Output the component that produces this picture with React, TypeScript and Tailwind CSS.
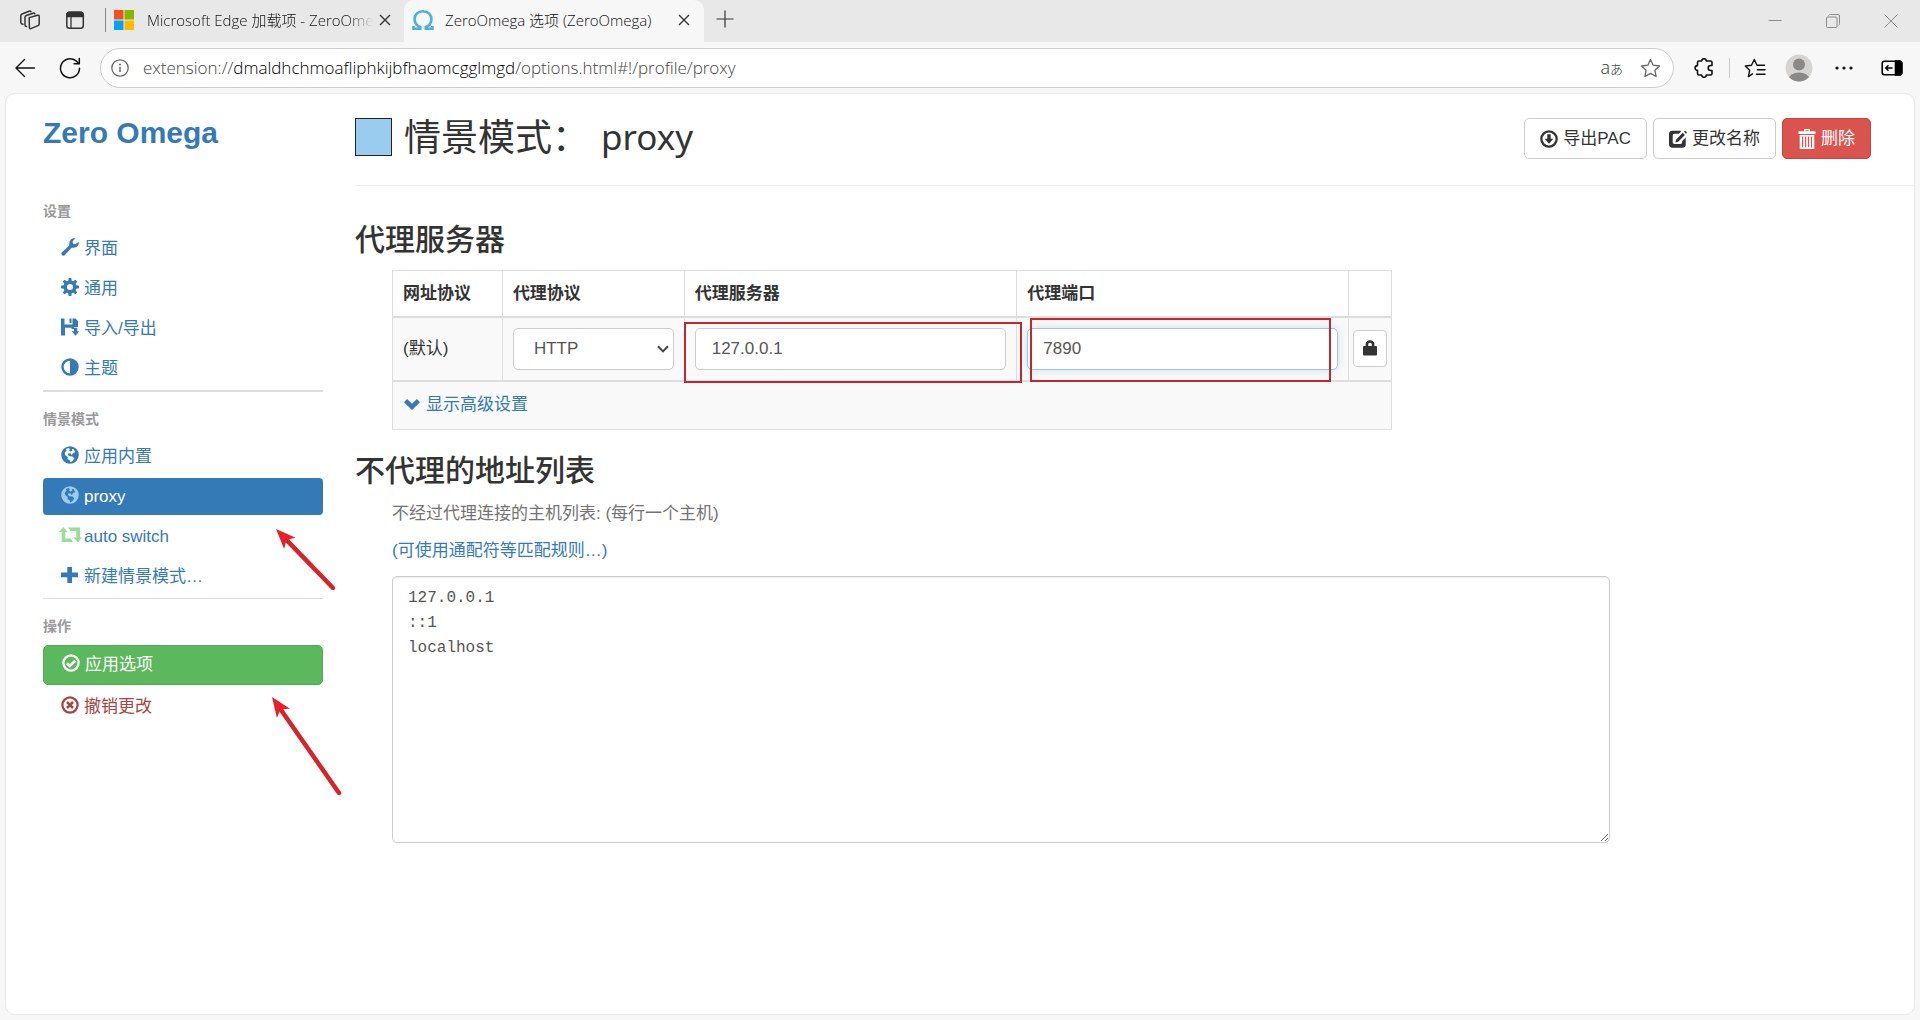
import React from "react";

type IconProps = { className?: string };

const small = "h-[18px] w-[18px] shrink-0";

/* ---------- browser chrome icons ---------- */

const WorkspacesIcon = () => (
  <svg viewBox="0 0 22 22" className="h-[22px] w-[22px]" fill="none" stroke="#333" strokeWidth="1.5" strokeLinejoin="round" strokeLinecap="round">
    <path d="M10.2 8.6 18.6 6.2Q20.2 5.9 20.2 7.5V15q0 1.2-1.2 1.6l-6.6 2.8q-2 .8-2-1.200z" />
    <path d="M7.600 17.600Q6 17.600 6 16V8.300Q6 7 7.300 6.500L14 4.200q1.300-.4 1.900.6" />
    <path d="M4 15.300Q1.800 15 1.800 13.500V6.800Q1.800 5.500 3.100 5L10 2.200q1.300-.5 2 .5" />
  </svg>
);

const TabActionsIcon = () => (
  <svg viewBox="0 0 20 20" className="h-5 w-5" fill="none" stroke="#333" strokeWidth="1.5">
    <rect x="1.800" y="2.300" width="16.500" height="16" rx="2.800" />
    <path d="M1.800 5a2.700 2.700 0 0 1 2.700-2.700h11A2.700 2.700 0 0 1 18.300 5v1.500H1.800z" fill="#333" />
    <path d="M6 7v11" strokeWidth="1.300" />
  </svg>
);

const MicrosoftLogo = () => (
  <svg viewBox="0 0 20 20" className="h-5 w-5 shrink-0">
    <path fill="#f25022" d="M0 0h9.500v9.500H0z" />
    <path fill="#7fba00" d="M10.500 0H20v9.500h-9.500z" />
    <path fill="#00a4ef" d="M0 10.500h9.500V20H0z" />
    <path fill="#ffb900" d="M10.500 10.500H20V20h-9.500z" />
  </svg>
);

const OmegaLogo = () => (
  <svg viewBox="0 0 22 22" className="h-[22px] w-[22px] shrink-0" fill="none" stroke="#4cb0df" strokeWidth="2.600">
    <path d="M1.500 17v2.700h6.700V18C4.800 16.500 2.600 13.700 2.600 10.200 2.600 5.300 6.300 2.200 11 2.200s8.400 3.100 8.400 8c0 3.500-2.200 6.300-5.600 7.800v1.700h6.700V17" />
  </svg>
);

const CrossIcon = () => (
  <svg viewBox="0 0 12 12" className="h-3 w-3" stroke="#333" strokeWidth="1.400" fill="none">
    <path d="m1 1 10 10M11 1 1 11" />
  </svg>
);

const PlusThin = () => (
  <svg viewBox="0 0 18 18" className="h-[18px] w-[18px]" stroke="#333" strokeWidth="1.200" fill="none">
    <path d="M9 .500v17M.500 9h17" />
  </svg>
);

const MinimizeIcon = () => (
  <svg viewBox="0 0 14 14" className="h-3.5 w-3.5" stroke="#8a8a8a" fill="none">
    <path d="M.500 6.500h13" />
  </svg>
);

const RestoreIcon = () => (
  <svg viewBox="0 0 14 14" className="h-3.5 w-3.5" stroke="#8a8a8a" fill="none">
    <rect x=".500" y="3" width="10.500" height="10.500" rx="1" />
    <path d="M2.500 1.500Q3 .500 4.500.500H12Q13.500.500 13.500 2v7.500Q13.500 11 12.500 11.500" />
  </svg>
);

const CloseWindowIcon = () => (
  <svg viewBox="0 0 14 14" className="h-3.5 w-3.5" stroke="#8a8a8a" fill="none">
    <path d="m.500.500 13 13M13.500.500l-13 13" />
  </svg>
);

const BackIcon = () => (
  <svg viewBox="0 0 20 20" className="h-5 w-5" stroke="#111" strokeWidth="1.400" fill="none" strokeLinecap="round" strokeLinejoin="round">
    <path d="M19.500 10H1M9.500 1.500 1 10l8.500 8.500" />
  </svg>
);

const ReloadIcon = () => (
  <svg viewBox="0 0 22 22" className="h-[22px] w-[22px]" stroke="#111" strokeWidth="1.500" fill="none" strokeLinecap="round" strokeLinejoin="round">
    <path d="M20.500 11.200A9.500 9.500 0 1 1 17 3.900L20 6.500" />
    <path d="M20.300 1.500v5.200h-5.200" />
  </svg>
);

const InfoIcon = () => (
  <svg viewBox="0 0 18 18" className="h-[18px] w-[18px] shrink-0" stroke="#666" strokeWidth="1.300" fill="none">
    <circle cx="9" cy="9" r="8.200" />
    <path d="M9 7.800V13" strokeWidth="1.500" />
    <circle cx="9" cy="5.500" r="1" fill="#666" stroke="none" />
  </svg>
);

const starPath = "M10.500 1.500 13.200 7.200 19.500 8 14.900 12.300 16.100 18.500 10.500 15.400 4.900 18.500 6.100 12.300 1.500 8 7.800 7.200z";

const StarIcon = () => (
  <svg viewBox="0 0 21 21" className="h-[21px] w-[21px]" stroke="#666" strokeWidth="1.300" fill="none" strokeLinejoin="round">
    <path d={starPath} />
  </svg>
);

const PuzzleIcon = () => (
  <svg viewBox="0 0 20 20" className="h-5 w-5" stroke="#111" strokeWidth="1.600" fill="none" strokeLinejoin="round">
    <path d="M5 3H7.700a2.300 2.300 0 0 1 4.600 0H16.500Q18 3 18 4.500V7.500H16.700a2.500 2.500 0 0 0 0 5H18V15.500Q18 17 16.500 17H12.300a2.300 2.300 0 0 1-4.600 0H5Q3.500 17 3.500 15.500V12.400a2.400 2.400 0 0 1 0-4.800V4.500Q3.500 3 5 3z" />
  </svg>
);

const FavoritesIcon = () => (
  <svg viewBox="0 0 22 21" className="h-[21px] w-[22px]" stroke="#111" strokeWidth="1.400" fill="none" strokeLinejoin="round" strokeLinecap="round">
    <path d="M8.500 15.800 4.400 18.600 5.700 12.200 1.300 8 7.500 7.200 10.300 1.500 13 7.200H20.500M13.500 11.700h7.500M12.500 16.200H21" />
  </svg>
);

const Avatar = () => (
  <svg viewBox="0 0 28 28" className="h-7 w-7">
    <clipPath id="avatar-clip"><circle cx="14" cy="14" r="13.500" /></clipPath>
    <circle cx="14" cy="14" r="13.500" fill="#d5d4d2" />
    <g clipPath="url(#avatar-clip)" fill="#8b8986">
      <circle cx="14" cy="10.500" r="6" />
      <ellipse cx="14" cy="25.500" rx="10.500" ry="7" />
    </g>
  </svg>
);

const DotsIcon = () => (
  <svg viewBox="0 0 18 4" className="h-1 w-[18px]" fill="#111">
    <circle cx="2" cy="2" r="1.600" /><circle cx="9" cy="2" r="1.600" /><circle cx="16" cy="2" r="1.600" />
  </svg>
);

const SidePanelIcon = () => (
  <svg viewBox="0 0 22 16" className="h-4 w-[22px]" fill="none" stroke="#000" strokeWidth="1.600">
    <rect x="1.200" y="1.200" width="19.500" height="13.600" rx="2.200" />
    <path d="M14.500 1h4Q20.800 1 20.800 3.300v9.400Q20.800 15 18.500 15h-4z" fill="#000" />
    <path d="M11.500 8H5M7.500 5.300 4.700 8l2.800 2.700" strokeWidth="1.400" />
  </svg>
);

/* ---------- page icons ---------- */

const WrenchIcon = () => (
  <svg viewBox="0 0 18 18" className={small} fill="currentColor">
    <path d="M14.500.300 11.600 3.300 12 5.800 14.500 6.300 17.700 3.700C18.300 7 16.200 9.800 12.700 9.700L10.600 9.800 3.600 17.200C2 18.800-.800 16.200.700 14.500L8.100 7.800 8.300 5C8.500 1.600 11.300-.500 14.500.300z" />
  </svg>
);

const GearIcon = () => (
  <svg viewBox="0 0 18 18" className={small} fill="currentColor">
    {[0, 45, 90, 135].map((a) => (
      <path key={a} d="M7.700 0h2.600l.6 4H7.100zM7.700 18h2.600l.6-4H7.100z" transform={`rotate(${a} 9 9)`} />
    ))}
    <path fillRule="evenodd" d="M9 2.500a6.500 6.500 0 1 1 0 13 6.500 6.500 0 0 1 0-13zM9 6a3 3 0 1 0 0 6 3 3 0 0 0 0-6z" />
  </svg>
);

const SaveIcon = () => (
  <svg viewBox="0 0 18 18" className={small} fill="currentColor">
    <path fillRule="evenodd" d="M0 .500h3.500V6.500h8V.500H14.500L17 3V9H13v2H10.500V9.800H4V17.500H0zM8.500.500h2v4.500h-2z" />
    <path d="M13 9.800h3.200v3.400H18.300L14.600 17.800 10.600 13.200H13z" />
  </svg>
);

const ContrastIcon = () => (
  <svg viewBox="0 0 18 18" className={small} fill="currentColor">
    <path fillRule="evenodd" d="M9 .300a8.700 8.700 0 1 1 0 17.400A8.700 8.700 0 0 1 9 .300zM9 2.700a6.300 6.300 0 0 0 0 12.600z" />
  </svg>
);

const GlobeIcon = ({ className = "" }: IconProps) => (
  <svg viewBox="0 0 18 18" className={`${small} ${className}`} fill="currentColor">
    <path fillRule="evenodd" d="M9 .200a8.800 8.800 0 1 1 0 17.600A8.800 8.800 0 0 1 9 .200zM7.300 1.900 4.800 3.300 5.600 4.600 3.600 6.900 4.400 9.200 6.800 10.900 6.500 13 8.600 14.300 9.200 16.400 11.600 14.900 13.300 12.200 11.400 10.400 8.400 10.300 7 9 7.400 7.300 10 7.600 10.600 9.200 12.300 6.800 14.300 6.200 12.700 3.300 10.800 2.900 11.300 4.700 9.400 5.500 8 4.300 9 3z" />
  </svg>
);

const RetweetIcon = ({ className = "" }: IconProps) => (
  <svg viewBox="0 0 23 16" className={`h-4 w-[23px] shrink-0 ${className}`} fill="currentColor">
    <path d="M4.300 0 8.600 5H6.200v6.500h5.600L14 15H2.700V5H0zM9 .600h12v9.900h2.300L18.900 15.400 14.600 10.500h2.600V4h-5.600z" />
  </svg>
);

const PlusIcon = () => (
  <svg viewBox="0 0 18 18" className={small} fill="currentColor">
    <path d="M6.300 1h4.700v5.500H17v4.700h-6V17H6.300v-5.800H0V6.500h6.300z" />
  </svg>
);

const OkCircle = () => (
  <svg viewBox="0 0 18 18" className={small} fill="none" stroke="currentColor">
    <circle cx="9" cy="9" r="7.600" strokeWidth="2.300" />
    <path d="m5 9.200 2.800 2.700 5.400-5.200" strokeWidth="2.700" />
  </svg>
);

const RemoveCircle = () => (
  <svg viewBox="0 0 18 18" className={small} fill="none" stroke="currentColor">
    <circle cx="9" cy="9" r="7.600" strokeWidth="2.300" />
    <path d="m6 6 6 6M12 6l-6 6" strokeWidth="2.500" />
  </svg>
);

const DownloadIcon = () => (
  <svg viewBox="0 0 18 18" className={small} fill="currentColor">
    <path fillRule="evenodd" d="M9 .200a8.800 8.800 0 1 1 0 17.600A8.800 8.800 0 0 1 9 .200zM9 2.500a6.500 6.500 0 1 0 0 13 6.500 6.500 0 0 0 0-13z" />
    <path d="M7.300 4.300h3.400v4.400h2.600L9 13.700 4.700 8.700h2.600z" />
  </svg>
);

const EditIcon = () => (
  <svg viewBox="0 0 18 18" className={small} fill="currentColor">
    <path d="M12.500.800 10 3.800H5.500Q3.700 3.800 3.700 5.600v6.600Q3.700 14 5.500 14h6Q13.200 14 13.200 12.200V11L16.700 7.500v7Q16.700 17.700 13.500 17.700H3.500Q0 17.700 0 14.300V4Q0 .800 3.300.800z" />
    <path d="m13.700 2.800 2.200 2.200L9.200 11.700 6.300 12.500 7.200 9.500zM15 1.800 16 .600 18 2.600 17 3.800z" />
  </svg>
);

const TrashIcon = () => (
  <svg viewBox="0 0 18 20" className="h-5 w-[18px] shrink-0" fill="currentColor">
    <path fillRule="evenodd" d="M6 0h6v2.300h5.500V5H.500V2.300H6zM7.500 1.200v1.100h3V1.200zM1.700 6h14.600v14H1.700zM4 7.500v10.800h1.200V7.500zM7 7.500v10.800h1.200V7.500zM9.900 7.500v10.800h1.200V7.500zM12.900 7.500v10.800h1.200V7.500z" />
  </svg>
);

const LockIcon = () => (
  <svg viewBox="0 0 14 16" className="h-4 w-3.5" fill="currentColor">
    <path fillRule="evenodd" d="M2.600 6V4.200A4.100 4.100 0 0 1 7 .300a4.100 4.100 0 0 1 4.400 3.900V6H13q1 0 1 1v7.500q0 1-1 1H1q-1 0-1-1V7q0-1 1-1zM5.200 6h3.600V4.500A1.700 1.700 0 0 0 7 2.800 1.700 1.700 0 0 0 5.200 4.500z" />
  </svg>
);

const ChevronIcon = () => (
  <svg viewBox="0 0 16 11" className="h-[11px] w-4" fill="none" stroke="currentColor" strokeWidth="4.500">
    <path d="m1.500 1.600 6.500 6.200L14.500 1.600" />
  </svg>
);

const SelectArrow = () => (
  <svg viewBox="0 0 12 8" className="pointer-events-none absolute top-[17px] right-[5px] h-2 w-3" fill="none" stroke="#444" strokeWidth="2">
    <path d="m1 1.200 5 5.200 5-5.200" />
  </svg>
);

/* ---------- sidebar ---------- */

function NavItem({ icon, label, className = "text-[#337ab7]" }: { icon: React.ReactNode; label: string; className?: string }) {
  return (
    <li>
      <a href="#" className={`flex h-[37px] items-center gap-[5px] rounded pl-[18px] text-[17px] ${className}`}>
        <span className="flex w-[18px] -translate-y-0.5 justify-center">{icon}</span>
        <span>{label}</span>
      </a>
    </li>
  );
}

function NavGroup({ title, children, className = "" }: { title: string; children: React.ReactNode; className?: string }) {
  return (
    <section className={`mb-[17px] border-[#ddd] pb-[3px] ${className}`}>
      <h2 className="mb-[9px] text-[14px] leading-5 font-bold text-[#999]">{title}</h2>
      <ul className="flex flex-col gap-[3px]">{children}</ul>
    </section>
  );
}

function Arrow({ className, w, h }: { className: string; w: number; h: number }) {
  const angle = (Math.atan2(h, w) * 180) / Math.PI;
  const len = Math.hypot(w, h);
  return (
    <svg className={`pointer-events-none absolute h-px w-px overflow-visible ${className}`} aria-hidden="true">
      <g transform={`rotate(${angle})`}>
        <path d={`M14 0H${len}`} stroke="#d9232b" strokeWidth="4.500" strokeLinecap="round" />
        <path d="M0 0 20-8 15 0 20 8z" fill="#e8202a" />
      </g>
    </svg>
  );
}

const cell = "border border-[#ddd] px-[10px]";
const field = "h-[42px] w-full rounded-[5px] border bg-white text-[17px] text-[#555] outline-none";
const toolButton = "flex h-[41px] items-center gap-[5px] rounded-[5px] border px-[15px] text-[17px]";

export default function App() {
  return (
    <div className="flex min-h-screen flex-col bg-[#f7f7f7] font-['Liberation_Sans','Noto_Sans_CJK_SC',sans-serif] text-[#333]">
      {/* Tab strip */}
      <header className="flex h-[42px] bg-[#e8e8e8] font-['Open_Sans','Noto_Sans_CJK_SC',sans-serif] text-[15px] font-light text-[#111]">
        <div className="flex w-[404px] items-center pr-[13px] pb-0.5 pl-[19px]">
          <button aria-label="工作区"><WorkspacesIcon /></button>
          <button aria-label="标签页操作" className="ml-6"><TabActionsIcon /></button>
          <span className="ml-5 h-6 w-px bg-[#888]" />
          <span className="ml-2"><MicrosoftLogo /></span>
          <span className="ml-[13px] whitespace-nowrap [mask-image:linear-gradient(to_right,#000_88%,transparent)]">
            Microsoft Edge 加载项 - ZeroOme
          </span>
          <button aria-label="关闭标签页" className="ml-auto"><CrossIcon /></button>
        </div>
        <div className="flex w-[300px] items-center rounded-t-[10px] bg-[#f7f7f7] pr-[14px] pb-0.5 pl-2">
          <OmegaLogo />
          <span className="ml-[11px] whitespace-nowrap">ZeroOmega 选项 (ZeroOmega)</span>
          <button aria-label="关闭标签页" className="ml-auto"><CrossIcon /></button>
        </div>
        <button aria-label="新建标签页" className="ml-3 pb-1"><PlusThin /></button>
        <div className="ml-auto flex items-center gap-11 pr-[22px]">
          <button aria-label="最小化"><MinimizeIcon /></button>
          <button aria-label="还原"><RestoreIcon /></button>
          <button aria-label="关闭"><CloseWindowIcon /></button>
        </div>
      </header>

      {/* Address bar */}
      <div className="flex items-center pt-1.5 pr-[17px] pb-[5px] pl-[15px]">
        <button aria-label="后退"><BackIcon /></button>
        <button aria-label="刷新" className="ml-6"><ReloadIcon /></button>
        <div className="ml-[19px] flex h-10 min-w-0 flex-1 items-center rounded-full border border-[#ccc] bg-white pr-3 pl-[10px] font-['Open_Sans','Noto_Sans_CJK_SC',sans-serif] font-light">
          <InfoIcon />
          <span className="ml-[14px] flex-1 overflow-hidden text-[17px] whitespace-nowrap text-[#444]">
            extension://<span className="text-black">dmaldhchmoafliphkijbfhaomcgglmgd</span>/options.html#!/profile/proxy
          </span>
          <button aria-label="翻译" className="mr-[17px] flex items-baseline text-[#333]">
            <span className="text-[18px] leading-5">a</span><span className="text-[13px] leading-5">あ</span>
          </button>
          <button aria-label="收藏"><StarIcon /></button>
        </div>
        <button aria-label="扩展" className="ml-[20px]"><PuzzleIcon /></button>
        <span className="ml-[15px] h-5 w-px bg-[#ccc]" />
        <button aria-label="收藏夹" className="ml-[14px]"><FavoritesIcon /></button>
        <button aria-label="个人资料" className="ml-[19px]"><Avatar /></button>
        <button aria-label="设置及其他" className="ml-[22px]"><DotsIcon /></button>
        <button aria-label="侧边栏" className="ml-[28px]"><SidePanelIcon /></button>
      </div>

      {/* Page */}
      <div className="relative mx-[5px] mb-[5px] flex flex-1 rounded-[10px] border border-[#e9e9e9] bg-white">
        <aside className="mr-[32px] ml-[37px] w-[280px] shrink-0 pt-[21px]">
          <h1 className="mb-[50px] text-[30px] leading-9 font-bold text-[#337ab7]">Zero Omega</h1>
          <nav>
            <NavGroup title="设置" className="border-b-2">
              <NavItem icon={<WrenchIcon />} label="界面" />
              <NavItem icon={<GearIcon />} label="通用" />
              <NavItem icon={<SaveIcon />} label="导入/导出" />
              <NavItem icon={<ContrastIcon />} label="主题" />
            </NavGroup>
            <NavGroup title="情景模式" className="border-b">
              <NavItem icon={<GlobeIcon />} label="应用内置" />
              <NavItem icon={<GlobeIcon className="text-[#99ccee]" />} label="proxy" className="bg-[#337ab7] text-white" />
              <NavItem icon={<RetweetIcon className="text-[#99dd99]" />} label="auto switch" />
              <NavItem icon={<PlusIcon />} label="新建情景模式…" />
            </NavGroup>
            <NavGroup title="操作">
              <li>
                <button className="flex h-10 w-full items-center gap-[5px] rounded-[5px] border border-[#4cae4c] bg-[#5cb85c] pl-[18px] text-[17px] text-white">
                  <span className="-translate-y-0.5"><OkCircle /></span>应用选项
                </button>
              </li>
              <NavItem icon={<RemoveCircle />} label="撤销更改" className="text-[#a94442]" />
            </NavGroup>
          </nav>
        </aside>

        <main className="min-w-0 flex-1 pt-6">
          <div className="flex items-start border-b border-[#eee] pr-[43px] pb-[26px]">
            <span className="h-[38px] w-[37px] border border-[#222] bg-[#99ccee]" />
            <h1 className="ml-3 flex h-[37px] items-center gap-3 font-['Noto_Sans','Noto_Sans_CJK_SC',sans-serif] leading-10 whitespace-nowrap">
              <span className="text-[37px]">情景模式：</span><span className="text-[35px]">proxy</span>
            </h1>
            <div className="ml-auto flex gap-[6px]">
              <button className={`${toolButton} border-[#ccc] bg-white`}><DownloadIcon />导出PAC</button>
              <button className={`${toolButton} border-[#ccc] bg-white`}><EditIcon />更改名称</button>
              <button className={`${toolButton} border-[#d43f3a] bg-[#d9534f] text-white`}><TrashIcon />删除</button>
            </div>
          </div>

          <section>
            <h2 className="mt-9 text-[30px] leading-9 font-medium">代理服务器</h2>
            <div className="mt-3 mr-[43px] ml-[37px]">
              <table className="w-full max-w-[1000px] table-fixed border-collapse text-left text-[17px]">
                <colgroup>
                  <col className="w-[11%]" /><col className="w-[18.2%]" /><col className="w-[33.3%]" /><col className="w-[33.2%]" /><col className="w-[4.3%]" />
                </colgroup>
                <thead>
                  <tr className="h-[46px] border-b-2 border-[#ddd]">
                    <th className={cell}>网址协议</th>
                    <th className={cell}>代理协议</th>
                    <th className={cell}>代理服务器</th>
                    <th className={cell}>代理端口</th>
                    <th className={cell} aria-label="认证" />
                  </tr>
                </thead>
                <tbody>
                  <tr className="h-16 bg-[#f9f9f9]">
                    <td className={cell}>(默认)</td>
                    <td className={cell}>
                      <div className="relative">
                        <select aria-label="代理协议" className={`${field} appearance-none border-[#ccc] pl-5`} defaultValue="HTTP">
                          <option>HTTP</option>
                          <option>HTTPS</option>
                          <option>SOCKS4</option>
                          <option>SOCKS5</option>
                        </select>
                        <SelectArrow />
                      </div>
                    </td>
                    <td className={cell}>
                      <div className="relative">
                        <input aria-label="代理服务器" className={`${field} border-[#ccc] px-4`} defaultValue="127.0.0.1" />
                        <span className="pointer-events-none absolute -top-[6px] -right-[16px] -bottom-[13px] -left-[11px] border-2 border-[#c1272d]" />
                      </div>
                    </td>
                    <td className={cell}>
                      <div className="relative">
                        <input aria-label="代理端口" className={`${field} border-[#9fc3e6] px-[15px] shadow-[0_0_8px_rgba(102,175,233,0.3)]`} defaultValue="7890" />
                        <span className="pointer-events-none absolute -top-[10px] right-[7px] -bottom-[12px] left-[3px] border-2 border-[#c1272d]" />
                      </div>
                    </td>
                    <td className="border border-[#ddd] px-1">
                      <button aria-label="代理认证" className="flex h-[37px] w-full items-center justify-center rounded border border-[#ccc] bg-white pb-0.5">
                        <LockIcon />
                      </button>
                    </td>
                  </tr>
                </tbody>
                <tfoot>
                  <tr className="h-[49px] border-t-2 border-[#ddd] bg-[#f9f9f9]">
                    <td colSpan={5} className={cell}>
                      <a href="#" className="flex items-center gap-[6px] pb-0.5 pl-px text-[#337ab7]"><ChevronIcon />显示高级设置</a>
                    </td>
                  </tr>
                </tfoot>
              </table>
            </div>
          </section>

          <section>
            <h2 className="mt-[23px] text-[30px] leading-9 font-medium">不代理的地址列表</h2>
            <div className="mr-[43px] ml-[37px] text-[17px] leading-6">
              <p id="bypass-help" className="mt-[13px] text-[#737373]">不经过代理连接的主机列表: (每行一个主机)</p>
              <p className="mt-[13px]"><a href="#" className="text-[#337ab7]">(可使用通配符等匹配规则…)</a></p>
              <textarea
                aria-labelledby="bypass-help"
                className="mt-[13px] block h-[267px] w-full max-w-[1218px] resize rounded-[5px] border border-[#ccc] px-[15px] py-[9px] font-['Liberation_Mono',monospace] text-[16px] leading-[25px] text-[#555] shadow-[inset_0_1px_1px_rgba(0,0,0,0.075)] outline-none"
                defaultValue={"127.0.0.1\n::1\nlocalhost"}
              />
            </div>
          </section>
        </main>

        <Arrow className="top-[435px] left-[270px]" w={57} h={59} />
        <Arrow className="top-[603px] left-[266px]" w={67} h={96} />
      </div>
    </div>
  );
}
